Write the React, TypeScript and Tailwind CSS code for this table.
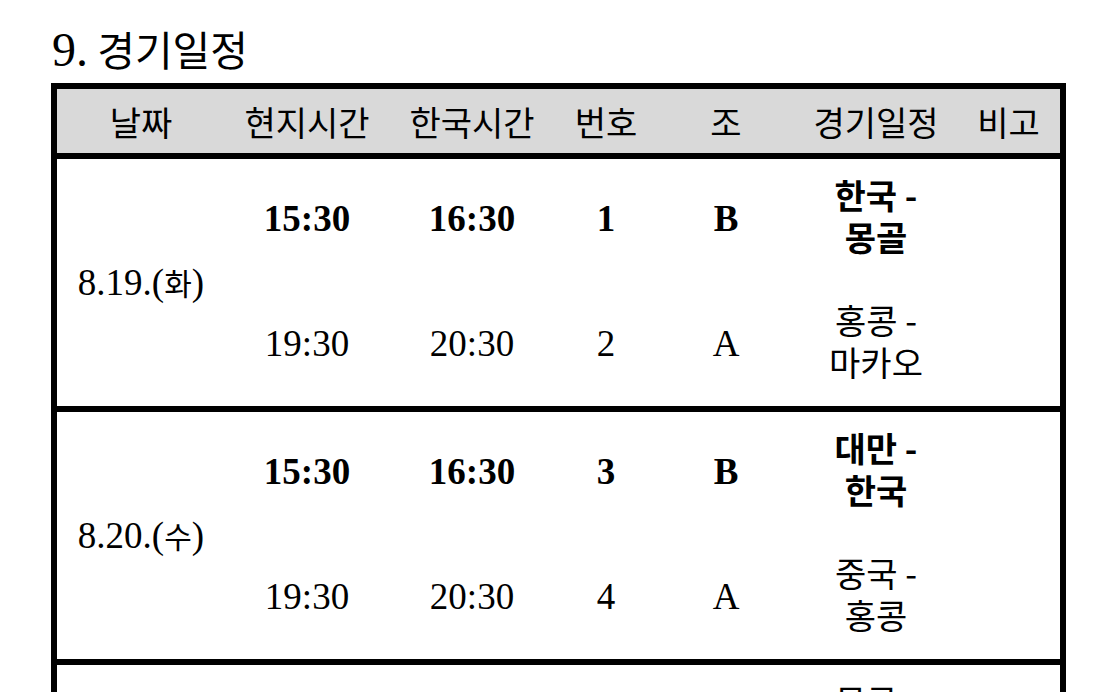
import React from "react";

interface Game {
  local: string;
  kst: string;
  no: string;
  group: string;
  teams: [string, string];
  bold?: boolean;
}

interface Day {
  date: string;
  dow: string;
  games: [Game, Game];
}

const days: Day[] = [
  {
    date: "8.19.",
    dow: "화",
    games: [
      { local: "15:30", kst: "16:30", no: "1", group: "B", teams: ["한국 -", "몽골"], bold: true },
      { local: "19:30", kst: "20:30", no: "2", group: "A", teams: ["홍콩 -", "마카오"] },
    ],
  },
  {
    date: "8.20.",
    dow: "수",
    games: [
      { local: "15:30", kst: "16:30", no: "3", group: "B", teams: ["대만 -", "한국"], bold: true },
      { local: "19:30", kst: "20:30", no: "4", group: "A", teams: ["중국 -", "홍콩"] },
    ],
  },
  {
    date: "8.21.",
    dow: "목",
    games: [
      { local: "15:30", kst: "16:30", no: "5", group: "B", teams: ["몽골 -", "대만"] },
      { local: "19:30", kst: "20:30", no: "6", group: "A", teams: ["마카오 -", "중국"] },
    ],
  },
];

const headers = ["날짜", "현지시간", "한국시간", "번호", "조", "경기일정", "비고"];

const serif = "font-['Liberation_Serif','Noto_Sans_CJK_KR',serif]";
const sans = "font-['Noto_Sans_CJK_KR','Noto_Sans',sans-serif]";
const cols = "grid grid-cols-[168px_164px_166px_102px_138px_162px_103px]";

const GameCells: React.FC<{ game: Game; first?: boolean }> = ({ game, first }) => {
  const weight = game.bold ? "font-bold" : "font-normal";
  const lift = first ? "pb-[4px]" : "pb-0";
  const teamLift = first ? "pb-[10px]" : "pb-[6px]";
  return (
    <>
      {[game.local, game.kst, game.no, game.group].map((v, i) => (
        <div key={i} className={`flex items-center justify-center text-[37px] ${lift} ${serif} ${weight}`}>
          {v}
        </div>
      ))}
      <div className={`flex flex-col items-center justify-center text-[34px] leading-[42px] ${teamLift} ${sans} ${weight}`}>
        <span>{game.teams[0]}</span>
        <span>{game.teams[1]}</span>
      </div>
      <div />
    </>
  );
};

export default function App() {
  return (
    <div className="h-[692px] w-[1110px] overflow-hidden bg-white text-black">
      {/* Title */}
      <div className="h-[83px] pl-[52px] pt-[20px]">
        <div className="text-[48px] leading-[56px] whitespace-nowrap">
          <span className={serif}>9.</span>
          <span className={`text-[41px] ${sans}`}> 경기일정</span>
        </div>
      </div>

      {/* Schedule table */}
      <div className="ml-[51px] w-[1015px] border-[6px] border-black">
        <div className={`${cols} h-[70px] bg-[#d9d9d9] border-b-[6px] border-black`}>
          {headers.map((h) => (
            <div key={h} className={`flex items-center justify-center text-[34px] ${sans}`}>
              {h}
            </div>
          ))}
        </div>

        {days.map((day) => (
          <div key={day.date} className={`${cols} grid-rows-[123px_124px] border-b-[6px] border-black`}>
            <div className={`row-span-2 flex items-center justify-center text-[37px] ${serif}`}>
              {day.date}(<span className={`text-[30px] ${sans}`}>{day.dow}</span>)
            </div>
            <GameCells game={day.games[0]} first />
            <GameCells game={day.games[1]} />
          </div>
        ))}
      </div>
    </div>
  );
}
